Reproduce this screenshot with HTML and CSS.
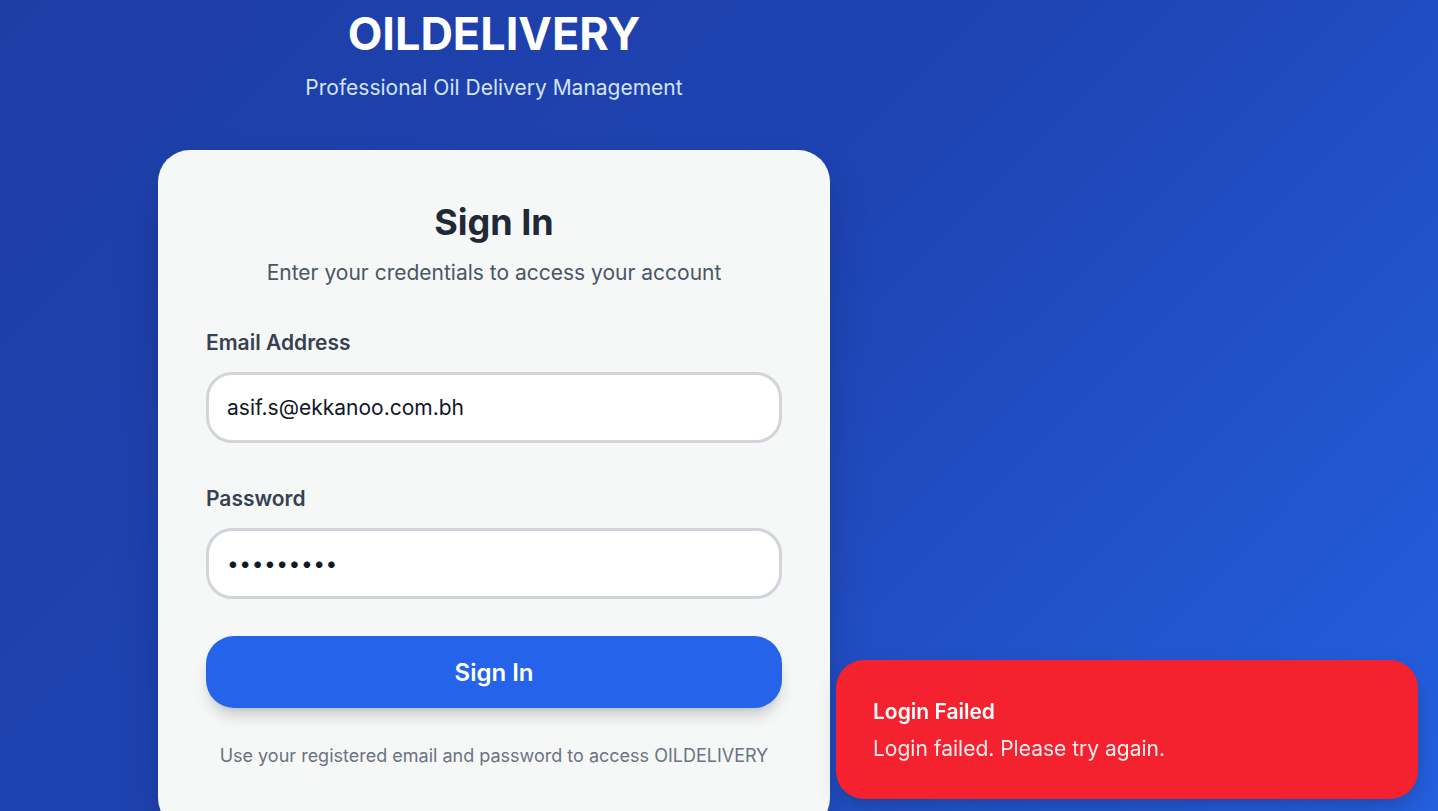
FILE: index.html
```html
<!DOCTYPE html>
<html lang="en">
<head>
<meta charset="utf-8">
<title>OILDELIVERY - Sign In</title>
<link rel="stylesheet" href="styles.css">
</head>
<body>
<div class="page">
  <main class="left">
    <div class="column">
      <header class="brand">
        <h1 class="brand-title">OILDELIVERY</h1>
        <p class="brand-sub">Professional Oil Delivery Management</p>
      </header>
      <section class="card">
        <h2 class="card-title">Sign In</h2>
        <p class="card-sub">Enter your credentials to access your account</p>
        <form class="form">
          <div class="field">
            <label class="label" for="email">Email Address</label>
            <input class="input" id="email" type="email" value="asif.s@ekkanoo.com.bh">
          </div>
          <div class="field">
            <label class="label" for="pw">Password</label>
            <input class="input" id="pw" type="password" value="password1">
          </div>
          <button class="btn" type="button">Sign In</button>
        </form>
        <p class="card-foot">Use your registered email and password to access OILDELIVERY</p>
      </section>
    </div>
  </main>
  <aside class="right"></aside>
</div>
<div class="toast" role="alert">
  <div class="toast-title">Login Failed</div>
  <div class="toast-msg">Login failed. Please try again.</div>
</div>
</body>
</html>
```

FILE: styles.css
```css
* { box-sizing: border-box; }
html, body { margin: 0; padding: 0; }
body {
  font-family: "Inter", "Noto Sans", "Liberation Sans", sans-serif;
  background: linear-gradient(135deg, #1e3ea6 0%, #1e43b2 45%, #2460e0 100%);
  min-height: 100vh;
  overflow: hidden;
}
.page {
  display: grid;
  grid-template-columns: 988px 1fr;
  min-height: 100vh;
}
.left {
  display: flex;
  justify-content: center;
  padding-top: 7px;
}
.column {
  width: 672px;
  display: flex;
  flex-direction: column;
}
.brand { text-align: center; }
.brand-title {
  margin: 0;
  font-size: 45px;
  line-height: 53px;
  font-weight: 700;
  color: #ffffff;
}
.brand-sub {
  margin: 14px 0 0;
  font-size: 21px;
  line-height: 28px;
  color: #d3e4fd;
}
.card {
  margin-top: 48px;
  background: #f6f8f8;
  border-radius: 32px;
  padding: 52px 48px 60px;
  box-shadow: 0 25px 50px -12px rgba(0, 0, 0, 0.28);
  text-align: center;
}
.card-title {
  margin: 0;
  font-size: 36px;
  line-height: 40px;
  font-weight: 700;
  color: #1f2937;
}
.card-sub {
  margin: 17px 0 0;
  font-size: 21px;
  line-height: 28px;
  color: #4b5563;
}
.form {
  margin-top: 42px;
  display: flex;
  flex-direction: column;
  text-align: left;
}
.field {
  display: flex;
  flex-direction: column;
  margin-bottom: 28px;
}
.field + .field { margin-top: 14px; }
.field:last-of-type { margin-bottom: 37px; }
.label {
  font-size: 21px;
  line-height: 28px;
  font-weight: 600;
  color: #374151;
  margin-bottom: 15px;
}
.input {
  height: 71px;
  border: 3px solid #d1d5db;
  border-radius: 26px;
  background: #ffffff;
  padding: 0 18px;
  font-family: inherit;
  font-size: 21px;
  color: #111827;
  outline: none;
}
.input[type="password"] { letter-spacing: 0.5px; }
.btn {
  height: 72px;
  border: 0;
  border-radius: 28px;
  background: #2563eb;
  color: #ffffff;
  font-family: inherit;
  font-size: 24px;
  font-weight: 600;
  box-shadow: 0 10px 15px -3px rgba(0, 0, 0, 0.18), 0 4px 6px -4px rgba(0, 0, 0, 0.12);
  cursor: pointer;
}
.card-foot {
  margin: 34px 0 0;
  font-size: 18px;
  line-height: 28px;
  color: #6b7280;
}
.toast {
  position: fixed;
  right: 20px;
  bottom: 12px;
  width: 582px;
  background: #f4212f;
  border-radius: 28px;
  padding: 38px 37px 36px;
  color: #ffffff;
  box-shadow: 0 10px 25px -5px rgba(0, 0, 0, 0.25);
}
.toast-title {
  font-size: 21px;
  line-height: 28px;
  font-weight: 600;
}
.toast-msg {
  margin-top: 9px;
  font-size: 21px;
  line-height: 28px;
  opacity: 0.92;
}
```
